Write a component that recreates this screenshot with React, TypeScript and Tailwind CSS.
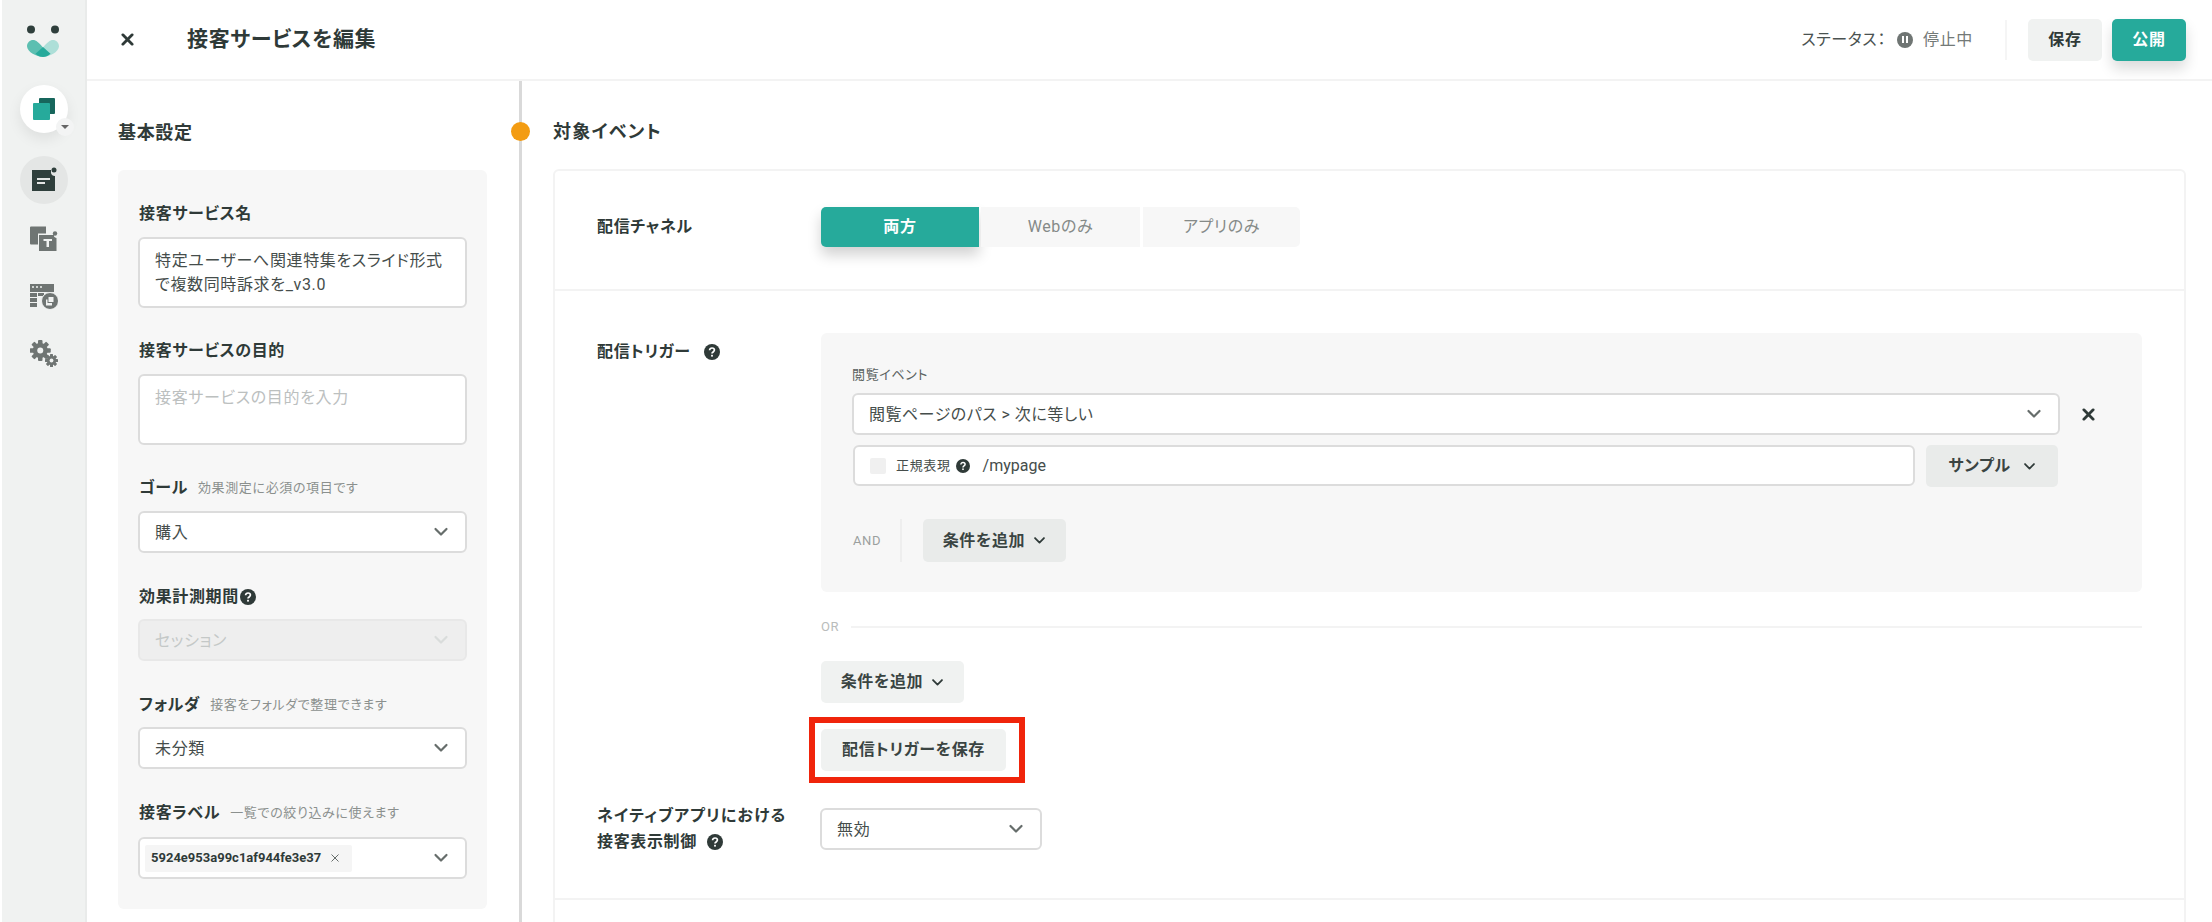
const font = "font-['Roboto','Noto_Sans_CJK_JP',sans-serif] [font-feature-settings:'palt'] tracking-[0.04em]";

function Chevron({ className = 'text-[#666]', size = 16 }: { className?: string; size?: number }) {
  return (
    <svg width={size} height={size} viewBox="0 0 16 16" fill="none" className={`shrink-0 ${className}`}>
      <path d="M2.5 5l5.5 5.5L13.5 5" stroke="currentColor" strokeWidth="2.2" strokeLinecap="round" strokeLinejoin="round" />
    </svg>
  );
}

function Cross({ size = 14 }: { size?: number }) {
  return (
    <svg width={size} height={size} viewBox="0 0 14 14" fill="none" className="shrink-0 text-[#2f3a38]">
      <path d="M2 2l10 10M12 2L2 12" stroke="currentColor" strokeWidth="3" strokeLinecap="round" />
    </svg>
  );
}

function Help({ size = 16 }: { size?: number }) {
  return (
    <svg width={size} height={size} viewBox="0 0 16 16" className="shrink-0">
      <circle cx="8" cy="8" r="8" fill="#2f3a38" />
      <path d="M5.6 6.2c0-1.4 1.1-2.2 2.4-2.2s2.4.8 2.4 2.1c0 1.9-2.4 1.8-2.4 3.5" fill="none" stroke="#fff" strokeWidth="1.7" />
      <rect x="7.1" y="10.8" width="1.8" height="1.8" fill="#fff" />
    </svg>
  );
}

function Logo() {
  return (
    <svg width="36" height="34" viewBox="0 0 36 34">
      <circle cx="6" cy="4.5" r="4" fill="#2f3f3c" />
      <circle cx="30" cy="4.5" r="4" fill="#2f3f3c" />
      <g transform="translate(0 15) scale(1 1.26) translate(0 -16)">
        <path d="M8 16c3 0 6 2 10 6l6 5c-3 2-4 2.500-6 2.500-6 0-16-4-16-8.500 0-3 3-5 6-5z" fill="#5cbfb1" />
        <path d="M28 16c-3 0-6 2-10 6l-6 5c3 2 4 2.500 6 2.500 6 0 16-4 16-8.500 0-3-3-5-6-5z" fill="#addfd8" />
        <path d="M18 21.500l7.500 5.500c-2.500 1.700-5 2.500-7.500 2.500s-5-.8-7.500-2.500z" fill="#26aa9b" />
      </g>
    </svg>
  );
}

function Sidebar() {
  return (
    <div className="w-[85px] ml-[2px] shrink-0 flex flex-col items-center bg-[#f0f2f1] border-r-2 border-[#e9ebea]">
      <div className="h-[85px] w-full shrink-0 flex justify-center pt-[25px] pr-[1px]">
        <Logo />
      </div>
      <div className="relative w-[48px] h-[48px] rounded-full bg-white shadow-[0_6px_14px_rgba(0,0,0,0.08)] flex items-center justify-center">
        <svg width="22" height="22" viewBox="0 0 22 22">
          <rect x="6" y="0" width="16" height="16" rx="1" fill="#17665c" />
          <rect x="0" y="5" width="17" height="17" rx="1" fill="#26aa9b" />
        </svg>
        <span className="absolute left-[36px] top-[33px] w-[18px] h-[18px] rounded-full bg-[#f3f4f4] flex items-center justify-center">
          <span className="w-0 h-0 border-x-[4px] border-x-transparent border-t-[4px] border-t-[#666]" />
        </span>
      </div>
      <div className="mt-[23px] w-[48px] h-[48px] rounded-full bg-[#e4e6e5] flex items-center justify-center">
        <svg width="26" height="26" viewBox="0 0 26 26">
          <path d="M1 3h19v3a4 4 0 0 0 4 3v15H1z" fill="#2f3f3c" />
          <circle cx="23" cy="3" r="2.500" fill="#2f3f3c" />
          <path d="M6 12h13M6 16h8" stroke="#e4e6e5" strokeWidth="1.800" />
        </svg>
      </div>
      <div className="mt-[22px]">
        <svg width="28" height="26" viewBox="0 0 28 26">
          <path d="M0 1.500A1 1 0 0 1 1 .5h15v7H8v11H1a1 1 0 0 1-1-1z" fill="#6f7573" />
          <path d="M9 9h15v1.500a3 3 0 0 0 2.500 1.500V25H9z" fill="#6f7573" />
          <circle cx="25" cy="7.500" r="2.200" fill="#6f7573" />
          <path d="M13.500 13h8.500v2h-3v6h-2.500v-6h-3z" fill="#f0f2f1" />
        </svg>
      </div>
      <div className="mt-[32px]">
        <svg width="28" height="26" viewBox="0 0 28 26">
          <path d="M0 0h24v8H0zM0 9h7v4H0zM0 14h7v4H0zM0 19h7v4H0zM8 9h6v3H8z" fill="#6f7573" />
          <path d="M2 3h2M6 3h2M10 3h2" stroke="#f0f2f1" strokeWidth="1.500" />
          <circle cx="20" cy="17" r="8.500" fill="#6f7573" stroke="#f0f2f1" strokeWidth="1" />
          <rect x="16" y="15.500" width="6" height="6" fill="#f0f2f1" />
          <rect x="18" y="12.500" width="6" height="6" fill="#f0f2f1" stroke="#6f7573" strokeWidth="1" />
        </svg>
      </div>
      <div className="mt-[30px]">
        <Gears />
      </div>
    </div>
  );
}

function Gears() {
  const teeth = [0, 45, 90, 135];
  return (
    <svg width="28" height="28" viewBox="0 0 28 28">
      <g fill="#6f7573">
        {teeth.map(a => (
          <rect key={a} x="8" y="0" width="4.500" height="21" rx="1" transform={`rotate(${a} 10.250 10.500)`} />
        ))}
        <circle cx="10.250" cy="10.500" r="7.500" />
        {teeth.map(a => (
          <rect key={a} x="20" y="14" width="3" height="13" rx="0.600" transform={`rotate(${a} 21.500 20.500)`} />
        ))}
        <circle cx="21.500" cy="20.500" r="4.600" />
      </g>
      <circle cx="10.250" cy="10.500" r="3" fill="#f0f2f1" />
      <circle cx="21.500" cy="20.500" r="1.900" fill="#f0f2f1" />
    </svg>
  );
}

function Header() {
  return (
    <div className="h-[81px] shrink-0 flex items-center border-b-2 border-[#f3f3f3] pl-[34px] pr-[26px]">
      <Cross size={13} />
      <div className="ml-[53px] text-[21px] font-bold text-[#2f3a38]">接客サービスを編集</div>
      <div className="ml-auto flex items-center text-[16px] text-[#4a5250]">
        <span>ステータス：</span>
        <span className="ml-[11px] w-[16px] h-[16px] rounded-full bg-[#6f7573] flex items-center justify-center gap-[2px]">
          <span className="w-[2px] h-[7px] bg-white" />
          <span className="w-[2px] h-[7px] bg-white" />
        </span>
        <span className="ml-[10px] text-[#737977]">停止中</span>
      </div>
      <div className="ml-[32px] w-[2px] h-[40px] bg-[#f5f5f5]" />
      <button className="ml-[21px] w-[74px] h-[42px] rounded-[5px] bg-[#f0f2f1] text-[16px] font-bold text-[#2f3a38]">保存</button>
      <button className="ml-[10px] w-[74px] h-[42px] rounded-[5px] bg-[#26aa9b] text-[16px] font-bold text-white shadow-[0_8px_14px_rgba(0,0,0,0.14)]">公開</button>
    </div>
  );
}

function Select({ text, className = '', disabled = false }: { text: string; className?: string; disabled?: boolean }) {
  return (
    <div className={`h-[42px] rounded-[6px] border-2 flex items-center pl-[15px] pr-[16px] text-[16px] ${disabled ? 'bg-[#eeeeee] border-[#e8e8e8] text-[#c4c8c7]' : 'bg-white border-[#dcdcdc] text-[#454d4b]'} ${className}`}>
      <span className="pt-[2px]">{text}</span>
      <Chevron className={`ml-auto ${disabled ? 'text-[#d9dcdb]' : 'text-[#666d6b]'}`} />
    </div>
  );
}

function Label({ text, hint, help, className = '' }: { text: string; hint?: string; help?: boolean; className?: string }) {
  return (
    <div className={`h-[24px] pl-[1px] flex items-center ${className}`}>
      <span className="text-[16px] font-bold text-[#2f3a38]">{text}</span>
      {help && <span className="ml-[1px]"><Help /></span>}
      {hint && <span className="ml-[10px] text-[13px] text-[#8b908e]">{hint}</span>}
    </div>
  );
}

function SettingsPanel() {
  return (
    <div className="w-[432px] shrink-0 pl-[31px] pr-[32px]">
      <div className="mt-[39px] h-[24px] flex items-center text-[18px] font-bold text-[#2f3a38]">基本設定</div>
      <div className="mt-[26px] h-[739px] rounded-[6px] bg-[#f7f7f7] pt-[32px] pb-[30px] pl-[20px] pr-[20px]">
        <Label text="接客サービス名" />
        <div className="mt-[11px] h-[71px] rounded-[6px] border-2 border-[#dcdcdc] bg-white pl-[15px] pr-[10px] pt-[10px] text-[16px] leading-[24px] text-[#454d4b]">
          特定ユーザーへ関連特集をスライド形式で複数同時訴求を_v3.0
        </div>
        <Label text="接客サービスの目的" className="mt-[31px]" />
        <div className="mt-[11px] h-[71px] rounded-[6px] border-2 border-[#dcdcdc] bg-white pl-[15px] pt-[10px] text-[16px] leading-[24px] text-[#bcc0bf]">
          接客サービスの目的を入力
        </div>
        <Label text="ゴール" hint="効果測定に必須の項目です" className="mt-[31px]" />
        <Select text="購入" className="mt-[11px]" />
        <Label text="効果計測期間" help className="mt-[32px]" />
        <Select text="セッション" disabled className="mt-[10px]" />
        <Label text="フォルダ" hint="接客をフォルダで整理できます" className="mt-[32px]" />
        <Select text="未分類" className="mt-[10px]" />
        <Label text="接客ラベル" hint="一覧での絞り込みに使えます" className="mt-[32px]" />
        <div className="mt-[12px] h-[42px] rounded-[6px] border-2 border-[#dcdcdc] bg-white flex items-center pl-[5px] pr-[16px]">
          <span className="h-[27px] w-[207px] flex items-center bg-[#f5f5f5] rounded-[2px] pl-[6px] text-[13px] font-bold tracking-normal text-[#2f3a38]">
            5924e953a99c1af944fe3e37
            <svg width="8" height="8" viewBox="0 0 8 8" className="ml-[10px] text-[#666d6b]">
              <path d="M.5.5l7 7M7.500.5l-7 7" stroke="currentColor" strokeWidth="1" />
            </svg>
          </span>
          <Chevron className="ml-auto text-[#666d6b]" />
        </div>
      </div>
    </div>
  );
}

function GrayButton({ text, className = '' }: { text: string; className?: string }) {
  return (
    <button className={`h-[42px] rounded-[5px] flex items-center justify-center gap-[8px] text-[16px] font-bold text-[#3a4442] ${className}`}>
      {text}
      <Chevron size={13} className="text-[#2f3a38]" />
    </button>
  );
}

function EventSection() {
  return (
    <div className="relative flex-1 min-w-0 border-l-[3px] border-[#d9d9d9] pl-[31px] pr-[26px]">
      <span className="absolute left-[-11px] top-[41px] w-[19px] h-[19px] rounded-full bg-[#f39c12]" />
      <div className="mt-[38px] h-[24px] flex items-center text-[18px] font-bold tracking-[0.07em] text-[#2f3a38]">対象イベント</div>
      <div className="mt-[26px] rounded-[6px] border-2 border-[#f3f3f3] h-[800px]">
        {/* 配信チャネル */}
        <div className="flex h-[120px] pt-[36px] pl-[42px] border-b-2 border-[#f3f3f3]">
          <div className="w-[224px] h-[40px] flex items-center text-[16px] font-bold text-[#2f3a38]">配信チャネル</div>
          <div className="flex h-[40px] text-[16px]">
            <div className="w-[158px] rounded-l-[5px] bg-[#26aa9b] text-white font-bold flex items-center justify-center shadow-[0_8px_14px_rgba(0,0,0,0.18)]">両方</div>
            <div className="ml-[2px] w-[159px] bg-[#f7f7f7] text-[#858a88] flex items-center justify-center">Webのみ</div>
            <div className="ml-[3px] w-[157px] rounded-r-[5px] bg-[#f7f7f7] text-[#858a88] flex items-center justify-center">アプリのみ</div>
          </div>
        </div>

        {/* 配信トリガー */}
        <div className="flex pt-[42px] pl-[42px]">
          <div className="w-[224px] mt-[7px] h-[24px] flex items-center text-[16px] font-bold text-[#2f3a38]">
            配信トリガー<span className="ml-[13px]"><Help /></span>
          </div>
          <div className="w-[1321px]">
            <div className="h-[259px] rounded-[6px] bg-[#f7f7f7] pt-[33px] pl-[31px]">
              <div className="h-[18px] flex items-center text-[13px] text-[#5a6260]">閲覧イベント</div>
              <div className="mt-[9px] flex items-center">
                <Select text="閲覧ページのパス > 次に等しい" className="w-[1208px] pl-[14px] tracking-[0.03em]" />
                <span className="ml-[22px]"><Cross size={13} /></span>
              </div>
              <div className="mt-[10px] flex">
                <div className="ml-[1px] w-[1062px] h-[41px] rounded-[6px] border-2 border-[#dcdcdc] bg-white flex items-center pl-[15px]">
                  <span className="w-[16px] h-[16px] rounded-[2px] bg-[#f0f0f0]" />
                  <span className="ml-[10px] text-[13px] text-[#454d4b]">正規表現</span>
                  <span className="ml-[5px]"><Help size={14} /></span>
                  <span className="ml-[13px] pt-[1px] text-[16px] tracking-normal text-[#454d4b]">/mypage</span>
                </div>
                <GrayButton text="サンプル" className="ml-[11px] w-[132px] h-[41px] bg-[#e9ebea] gap-[12px]" />
              </div>
              <div className="mt-[32px] flex items-center">
                <span className="ml-[1px] w-[47px] text-[13px] text-[#9b9f9e]">AND</span>
                <span className="w-[2px] h-[43px] bg-[#eeeeee]" />
                <GrayButton text="条件を追加" className="ml-[21px] w-[143px] h-[43px] bg-[#e9ebea]" />
              </div>
            </div>
            <div className="mt-[23px] h-[24px] flex items-center">
              <span className="text-[13px] text-[#b9bcbb]">OR</span>
              <span className="ml-[12px] flex-1 h-[2px] bg-[#f3f3f3]" />
            </div>
            <GrayButton text="条件を追加" className="mt-[22px] w-[143px] bg-[#f0f2f1]" />
            <div className="relative mt-[26px] w-[185px]">
              <button className="w-[185px] h-[42px] rounded-[5px] bg-[#f0f2f1] text-[16px] font-bold text-[#3a4442]">配信トリガーを保存</button>
              <span className="absolute left-[-12px] top-[-12px] w-[216px] h-[66px] border-[6px] border-[#f0240b]" />
            </div>
          </div>
        </div>

        {/* ネイティブアプリ */}
        <div className="mt-[37px] flex pl-[42px] pb-[43px] border-b-2 border-[#f3f3f3]">
          <div className="w-[223px] text-[16px] font-bold leading-[26px] text-[#2f3a38] -mt-[5px]">
            <div className="tracking-[0.07em] whitespace-nowrap">ネイティブアプリにおける</div>
            <div className="flex items-center">接客表示制御<span className="ml-[10px]"><Help /></span></div>
          </div>
          <Select text="無効" className="w-[222px]" />
        </div>
      </div>
    </div>
  );
}

export default function App() {
  return (
    <div className={`flex h-[922px] w-[2212px] overflow-hidden bg-white ${font}`}>
      <Sidebar />
      <div className="flex-1 min-w-0 flex flex-col">
        <Header />
        <div className="flex flex-1 min-h-0 overflow-hidden">
          <SettingsPanel />
          <EventSection />
        </div>
      </div>
    </div>
  );
}
